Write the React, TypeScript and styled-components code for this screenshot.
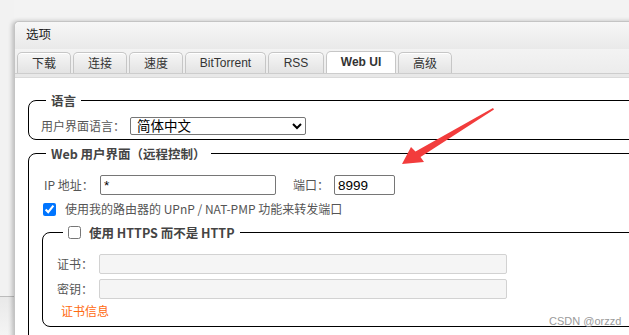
import styled, { createGlobalStyle } from "styled-components";

const GlobalStyle = createGlobalStyle`
  html, body {
    margin: 0;
    padding: 0;
    background: #f3f3f3;
    overflow: hidden;
  }
  body {
    font-family: "Noto Sans CJK SC", "Noto Sans", sans-serif;
  }
`;

const Page = styled.div`
  position: relative;
  display: flex;
  align-items: flex-start;
  width: 629px;
  height: 335px;
  overflow: hidden;
  background: #f3f3f3;
`;

const Gutter = styled.div`
  flex: none;
  align-self: stretch;
  width: 14px;
  display: flex;
  flex-direction: column;
`;

const GutterTop = styled.div`
  height: 296px;
  background: #f2f2f2;
`;

const GutterBottom = styled.div`
  flex: 1;
  border-top: 1px solid #bcbcbc;
  background: linear-gradient(#e9e9e9, #f4f4f4);
`;

const Window = styled.div`
  flex: none;
  width: 760px;
  margin-top: 21px;
  background: #fff;
  border: 1px solid #c4c4c4;
  border-right: none;
  border-bottom: none;
  border-top-left-radius: 5px;
  box-shadow: -2px 0 4px rgba(0, 0, 0, 0.22);
  display: flex;
  flex-direction: column;
`;

const TitleBar = styled.div`
  flex: none;
  height: 27px;
  box-sizing: border-box;
  display: flex;
  align-items: center;
  padding: 0 0 4px 11px;
  font-size: 12.5px;
  color: #222;
  background: linear-gradient(#f7f7f7, #e9e9e9);
  border-top-left-radius: 5px;
`;

const TabBar = styled.div`
  flex: none;
  height: 24px;
  display: flex;
  align-items: flex-end;
  gap: 2px;
  padding-left: 2px;
  background: linear-gradient(#f3f3f3, #ececec);
`;

const Tab = styled.div<{ $active?: boolean; $w: number }>`
  width: ${(p) => p.$w}px;
  height: ${(p) => (p.$active ? 22 : 21)}px;
  padding-bottom: 1px;
  display: flex;
  align-items: center;
  justify-content: center;
  box-sizing: border-box;
  border: 1px solid #c6c6c6;
  border-bottom: none;
  border-radius: 5px 5px 0 0;
  font-family: "Liberation Sans", "Noto Sans CJK SC", sans-serif;
  font-size: 12px;
  font-weight: ${(p) => (p.$active ? 700 : 400)};
  color: #333;
  background: ${(p) =>
    p.$active ? "#fff" : "linear-gradient(#f6f6f6, #e3e3e3)"};
  box-shadow: inset 0 1px 0 #fff;
`;

const TabBand = styled.div`
  flex: none;
  height: 3px;
  background: #e8e8e8;
  border-top: 1px solid #cdcdcd;
  border-bottom: 1px solid #dadada;
`;

const Content = styled.div`
  padding: 14px 0 0 13px;
  display: flex;
  flex-direction: column;
  gap: 5px;
`;

const Fieldset = styled.fieldset<{ $pl: number; $pt: number; $pb: number }>`
  margin: 0;
  min-width: 0;
  border: 1px solid #000;
  border-radius: 8px;
  padding: ${(p) => `${p.$pt}px 0 ${p.$pb}px ${p.$pl}px`};
  display: flex;
  flex-direction: column;
`;

const Legend = styled.legend<{ $ml: number }>`
  margin-left: ${(p) => p.$ml}px;
  padding: 0 5px;
  font-size: 12.5px;
  line-height: 17px;
  font-weight: 600;
  color: #444;
  display: flex;
  align-items: center;
  gap: 8px;
`;

const Row = styled.div<{ $ml?: number; $gap?: number }>`
  display: flex;
  align-items: center;
  margin-left: ${(p) => p.$ml ?? 0}px;
  margin-bottom: ${(p) => p.$gap ?? 0}px;
`;

const Label = styled.span<{ $w: number; $ml?: number }>`
  width: ${(p) => p.$w}px;
  margin-left: ${(p) => p.$ml ?? 0}px;
  flex: none;
  font-size: 12px;
  line-height: 16px;
  color: #555;
`;

const Text = styled.span`
  font-size: 12px;
  line-height: 16px;
  color: #555;
`;

const Select = styled.select`
  width: 176px;
  height: 18px;
  margin: 0;
  padding: 0 0 0 2px;
  box-sizing: border-box;
  border: 1px solid #767676;
  border-radius: 2px;
  background: #fff;
  color: #000;
  font-family: "Liberation Sans", "Noto Sans CJK SC", sans-serif;
  font-size: 13.5px;
`;

const Input = styled.input<{ $w: number; $disabled?: boolean }>`
  width: ${(p) => p.$w}px;
  height: 20px;
  margin: 0;
  padding: 0 3px;
  box-sizing: border-box;
  border: 1px solid ${(p) => (p.$disabled ? "#d2d2d2" : "#767676")};
  border-radius: 2px;
  background: ${(p) => (p.$disabled ? "#f5f5f5" : "#fff")};
  color: #000;
  font-family: "Liberation Sans", sans-serif;
  font-size: 13.5px;
  outline: none;
`;

const Check = styled.input`
  width: 13px;
  height: 13px;
  margin: 0;
  flex: none;
`;

const CheckRow = styled.label`
  display: flex;
  align-items: center;
  gap: 9px;
  margin-left: 1px;
  margin-bottom: 7px;
`;

const CertLink = styled.a`
  margin-left: 4px;
  font-size: 12px;
  line-height: 16px;
  color: #ff6a10;
  text-decoration: none;
`;

const Arrow = styled.svg`
  position: absolute;
  left: 0;
  top: 0;
  pointer-events: none;
`;

const Watermark = styled.div`
  position: absolute;
  left: 549px;
  top: 315px;
  font-family: "Liberation Sans", sans-serif;
  font-size: 11px;
  color: #9a9a9a;
`;

const tabs: [string, number][] = [
  ["下载", 54],
  ["连接", 54],
  ["速度", 54],
  ["BitTorrent", 81],
  ["RSS", 56],
  ["Web UI", 70],
  ["高级", 54],
];

export default function App() {
  return (
    <Page>
      <GlobalStyle />
      <Gutter>
        <GutterTop />
        <GutterBottom />
      </Gutter>
      <Window>
        <TitleBar>选项</TitleBar>
        <TabBar>
          {tabs.map(([t, w]) => (
            <Tab key={t} $w={w} $active={t === "Web UI"}>
              {t}
            </Tab>
          ))}
        </TabBar>
        <TabBand />
        <Content>
          <Fieldset $pl={12} $pt={8} $pb={4}>
            <Legend $ml={5}>语言</Legend>
            <Row>
              <Label $w={89}>用户界面语言：</Label>
              <Select defaultValue="zh">
                <option value="zh">简体中文</option>
              </Select>
            </Row>
          </Fieldset>
          <Fieldset $pl={13} $pt={13} $pb={30}>
            <Legend $ml={4}>Web 用户界面（远程控制）</Legend>
            <Row $ml={2} $gap={6}>
              <Label $w={56}>IP 地址：</Label>
              <Input $w={176} defaultValue="*" />
              <Label $w={41} $ml={17}>
                端口：
              </Label>
              <Input $w={61} defaultValue="8999" />
            </Row>
            <CheckRow>
              <Check type="checkbox" defaultChecked />
              <Text>使用我的路由器的 UPnP / NAT-PMP 功能来转发端口</Text>
            </CheckRow>
            <Fieldset $pl={14} $pt={13} $pb={7}>
              <Legend $ml={6}>
                <Check type="checkbox" />
                使用 HTTPS 而不是 HTTP
              </Legend>
              <Row $gap={5}>
                <Label $w={42}>证书：</Label>
                <Input $w={408} $disabled disabled />
              </Row>
              <Row $gap={4}>
                <Label $w={42}>密钥：</Label>
                <Input $w={408} $disabled disabled />
              </Row>
              <CertLink href="#">证书信息</CertLink>
            </Fieldset>
          </Fieldset>
        </Content>
      </Window>
      <Arrow width="629" height="335" viewBox="0 0 629 335">
        <polygon
          points="402,164 411,147 415.5,151.5 493,108 494,109.5 420.5,157 424,162"
          fill="#f23c3c"
        />
      </Arrow>
      <Watermark>CSDN @orzzd</Watermark>
    </Page>
  );
}
